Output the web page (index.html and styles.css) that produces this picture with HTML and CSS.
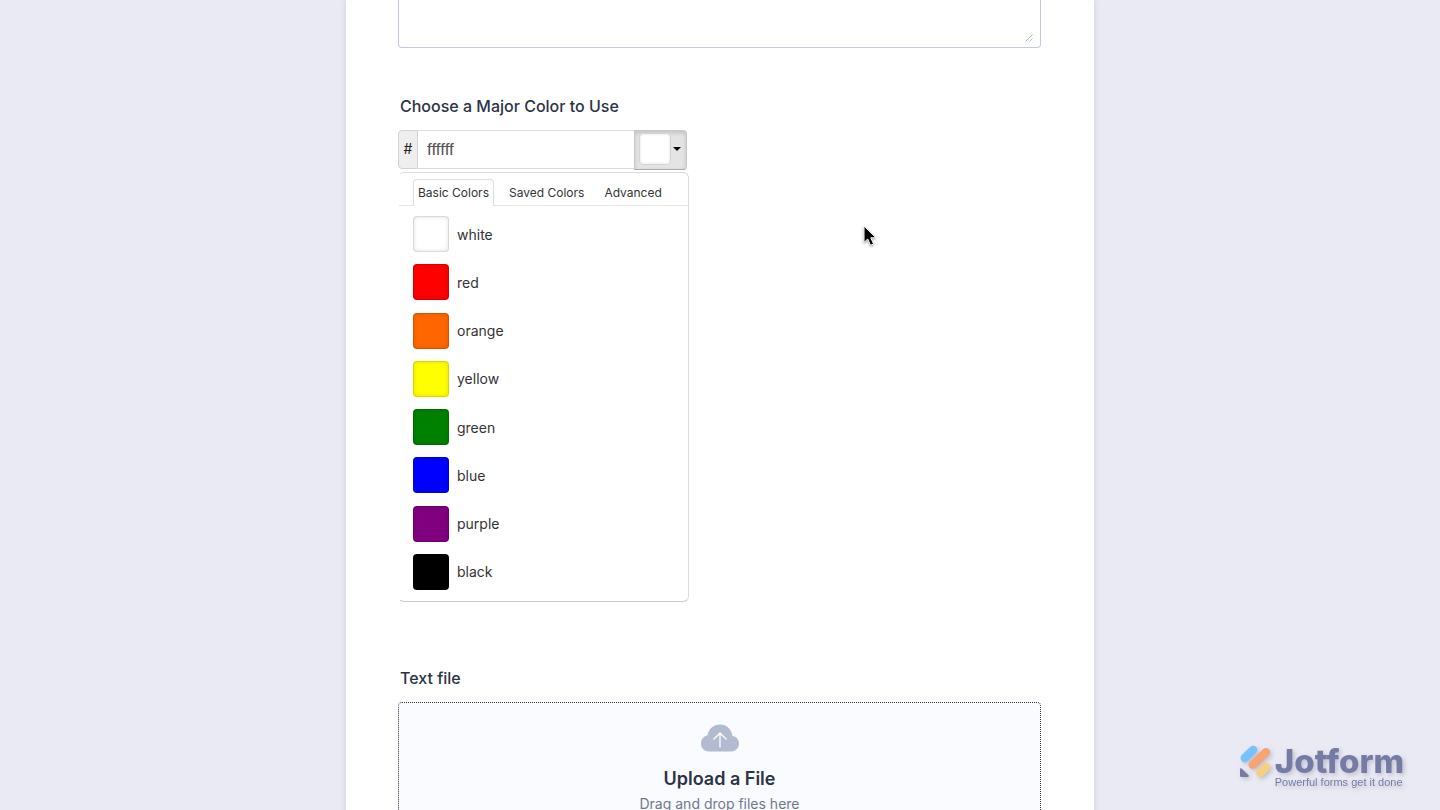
FILE: index.html
```html
<!DOCTYPE html>
<html lang="en">
<head>
    <meta charset="UTF-8">
    <meta name="viewport" content="width=device-width, initial-scale=1.0">
    <title>Form</title>
    <link rel="stylesheet" href="styles.css">
</head>
<body>
    <form class="form-card">
        <div class="textarea-wrapper">
            <textarea class="form-textarea" aria-label="Description"></textarea>
            <svg class="resize-grip" width="8" height="8" viewBox="0 0 8 8" fill="none" stroke="#b4bbcf">
                <path d="M0.5 7.5L7.5 0.5M4.5 7.5L7.5 4.5"/>
            </svg>
        </div>

        <div class="form-group color-group">
            <label class="form-label" for="colorInput">Choose a Major Color to Use</label>
            <div class="color-picker">
                <div class="color-row">
                    <span class="color-hash">#</span>
                    <input type="text" class="color-input" id="colorInput" value="ffffff">
                    <button type="button" class="color-toggle" aria-label="Pick a color">
                        <span class="color-preview"></span>
                        <span class="caret"></span>
                    </button>
                </div>
                <div class="color-panel">
                    <div class="color-tabs">
                        <button type="button" class="color-tab active">Basic Colors</button>
                        <button type="button" class="color-tab">Saved Colors</button>
                        <button type="button" class="color-tab">Advanced</button>
                    </div>
                    <div class="color-list">
                        <button type="button" class="color-item"><span class="swatch white"></span>white</button>
                        <button type="button" class="color-item"><span class="swatch red"></span>red</button>
                        <button type="button" class="color-item"><span class="swatch orange"></span>orange</button>
                        <button type="button" class="color-item"><span class="swatch yellow"></span>yellow</button>
                        <button type="button" class="color-item"><span class="swatch green"></span>green</button>
                        <button type="button" class="color-item"><span class="swatch blue"></span>blue</button>
                        <button type="button" class="color-item"><span class="swatch purple"></span>purple</button>
                        <button type="button" class="color-item"><span class="swatch black"></span>black</button>
                    </div>
                </div>
            </div>
        </div>

        <div class="form-group">
            <label class="form-label" for="uploadBtn">Text file</label>
            <button type="button" class="upload-area" id="uploadBtn">
                <svg class="upload-icon" width="40" height="28" viewBox="0 0 40 28">
                    <path fill="#b3bbd1" d="M9 27.5C4.500 27.500 1 24 1 19.500C1 15.200 3.700 12.300 7.500 11.300C8.600 5 13.500 0.500 20 0.500C26.500 0.500 31.800 5.300 32.400 12C36.300 12.400 39 15.700 39 19.600C39 24 35.700 27.500 31.300 27.500Z"/>
                    <path fill="none" stroke="#fff" stroke-width="1.300" d="M20 23.500V9M13.500 15.500L20 9L26.500 15.500"/>
                </svg>
                <span class="upload-title">Upload a File</span>
                <span class="upload-text">Drag and drop files here</span>
            </button>
        </div>
    </form>

    <a class="brand" href="#">
        <svg class="brand-icon" width="32" height="34" viewBox="0 0 32 34" fill="none" stroke-linecap="round">
            <path stroke="#76c3fb" stroke-width="8.500" d="M4.800 14L13 6"/>
            <path stroke="#f7a475" stroke-width="8.500" d="M12.800 20.800L25.800 8.300"/>
            <path stroke="#f5d080" stroke-width="8.500" d="M20.300 28.700L26 23.200"/>
            <path fill="#757ba5" d="M0 25.500C0 24.300 1 24 1.800 24.700L8.300 31C9.300 32 8.800 33 7.500 33H1.500C0.500 33 0 32.500 0 31.500Z"/>
        </svg>
        <span class="brand-text">
            <span class="brand-name">Jotform</span>
            <span class="brand-tagline">Powerful forms get it done</span>
        </span>
    </a>

    <svg class="cursor" width="16" height="24" viewBox="0 0 16 24">
        <path fill="#000" stroke="#fff" d="M2 2V18.500L5.700 15L8.500 21.300L11.600 20L8.800 13.800H14Z"/>
    </svg>
</body>
</html>
```

FILE: styles.css
```css
* {
    margin: 0;
    padding: 0;
    box-sizing: border-box;
}

body {
    font-family: Inter, "Liberation Sans", sans-serif;
    background: #eaeaf4;
    color: #2c3345;
    height: 100vh;
    overflow: hidden;
}

button {
    font-family: inherit;
    border: none;
    background: none;
    cursor: pointer;
}

.form-card {
    width: 100%;
    max-width: 748px;
    min-height: 100%;
    margin: 0 auto;
    padding: 0 53px 0 52px;
    background: #fff;
    box-shadow: 0 0 6px rgba(84, 95, 111, 0.2);
}

.textarea-wrapper {
    position: relative;
    margin-bottom: 48px;
}

.form-textarea {
    display: block;
    width: 100%;
    height: 48px;
    padding: 10px;
    border: 1px solid #c3c9dc;
    border-top: none;
    border-radius: 0 0 4px 4px;
    resize: none;
}

.resize-grip {
    position: absolute;
    right: 8px;
    bottom: 6px;
}

.form-group {
    display: flex;
    flex-direction: column;
    gap: 14px;
}

.color-group {
    margin-bottom: 66px;
}

.form-label {
    padding: 0 2px;
    font-size: 16px;
    font-weight: 500;
    line-height: 20px;
}

.color-picker {
    width: 291px;
}

.color-row {
    display: flex;
    height: 40px;
    margin: 0 2px 2px 0;
}

.color-hash {
    width: 20px;
    height: 39px;
    border: 1px solid #d2d2d2;
    border-radius: 4px 0 0 4px;
    background: #eee;
    color: #222;
    font-size: 14px;
    line-height: 36px;
    text-align: center;
}

.color-input {
    flex: 1;
    min-width: 0;
    height: 39px;
    padding: 0 9px;
    border: 1px solid #ddd;
    border-width: 1px 0;
    color: #555;
    font-family: "Liberation Sans", sans-serif;
    font-size: 17px;
    outline: none;
}

.color-toggle {
    display: flex;
    align-items: center;
    gap: 2px;
    width: 53px;
    padding: 0 4px 2px;
    border: 1px solid #c8c8c8;
    border-bottom-color: #aaa;
    border-radius: 0 4px 4px 0;
    background: #e4e4e4;
    box-shadow: inset 0 2px 4px rgba(0, 0, 0, 0.15);
}

.color-preview {
    width: 32px;
    height: 32px;
    border: 1px solid #d4d4d4;
    border-radius: 4px;
    background: #fff;
    box-shadow: inset 0 0 3px rgba(0, 0, 0, 0.12);
}

.caret {
    border: 4px solid transparent;
    border-top-color: #000;
    border-bottom: none;
}

.color-panel {
    border: 1px solid #ddd;
    border-bottom-color: #ccc;
    border-left-color: #fff;
    border-radius: 6px;
}

.color-tabs {
    display: flex;
    gap: 10px;
    padding: 6px 14px 0;
    border-bottom: 1px solid #e4e4e4;
}

.color-tab {
    height: 26px;
    padding: 0 4px;
    border: 1px solid transparent;
    border-bottom: none;
    border-radius: 4px 4px 0 0;
    color: #333;
    font-size: 12px;
}

.color-tab.active {
    margin-bottom: -1px;
    padding-bottom: 1px;
    height: 27px;
    border-color: #ddd;
    background: #fff;
}

.color-list {
    display: flex;
    flex-direction: column;
    justify-content: space-between;
    height: 395px;
    padding: 10px 14px 11px;
}

.color-item {
    display: flex;
    align-items: center;
    gap: 8px;
    color: #333;
    font-size: 14px;
}

.swatch {
    width: 36px;
    height: 36px;
    border: 1px solid rgba(0, 0, 0, 0.15);
    border-radius: 4px;
    box-shadow: inset 0 0 4px rgba(0, 0, 0, 0.12);
}

.white {
    background: #fff;
}

.red {
    background: #f00;
}

.orange {
    background: #f60;
}

.yellow {
    background: #ff0;
}

.green {
    background: #008000;
}

.blue {
    background: #00f;
}

.purple {
    background: #800080;
}

.black {
    background: #000;
}

.upload-area {
    display: flex;
    flex-direction: column;
    align-items: center;
    padding: 21px 16px 40px;
    border: 1px dotted #2c3345;
    border-radius: 4px;
    background: #fafbff;
}

.upload-icon {
    margin-bottom: 15px;
}

.upload-title {
    margin-bottom: 3px;
    color: #2c3345;
    font-size: 18px;
    font-weight: 600;
    line-height: 24px;
}

.upload-text {
    color: #6f7891;
    font-size: 14px;
    line-height: 20px;
}

/* Watermark in the corner of the window */
.brand {
    position: fixed;
    right: 36px;
    bottom: 23px;
    display: flex;
    gap: 3px;
    color: #757ba5;
    text-decoration: none;
    filter: drop-shadow(2px 2px 2px rgba(60, 60, 100, 0.25));
}

.brand-text {
    display: flex;
    flex-direction: column;
}

.brand-name {
    padding-top: 1px;
    font-size: 33px;
    font-weight: 800;
    line-height: 32px;
}

.brand-tagline {
    font-family: "Liberation Sans", sans-serif;
    font-size: 11px;
    line-height: 10px;
}

.cursor {
    position: fixed;
    top: 224px;
    left: 862px;
    filter: drop-shadow(0 1px 1px rgba(0, 0, 0, 0.4));
}
```
